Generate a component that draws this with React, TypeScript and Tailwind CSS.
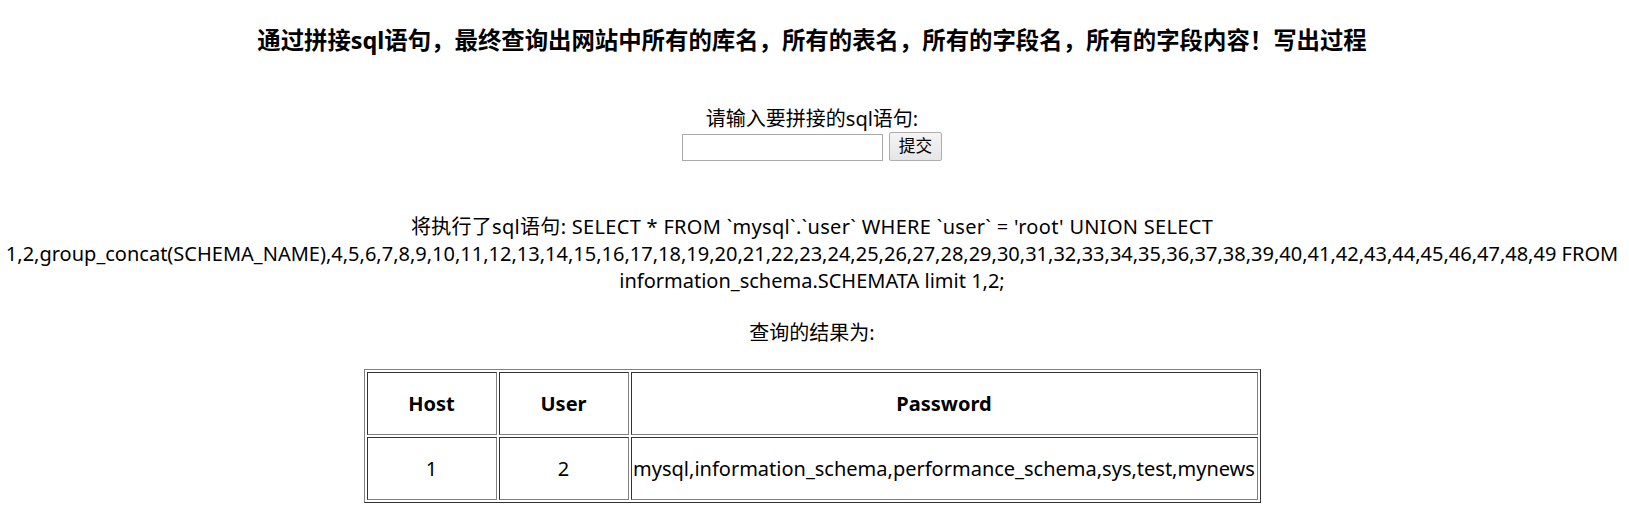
export default function App() {
  const font = {
    fontFamily: '"Noto Sans", "Noto Sans CJK SC", sans-serif',
  };

  return (
    <div
      className="w-[1624px] min-h-[519px] bg-white text-black text-center"
      style={font}
    >
      <h3 className="pt-[25px] text-[23.4px] leading-[31px] font-bold">
        通过拼接sql语句，最终查询出网站中所有的库名，所有的表名，所有的字段名，所有的字段内容！写出过程
      </h3>

      {/* form */}
      <div className="mt-[49px] text-[20px] leading-[27px]">请输入要拼接的sql语句:</div>
      <div className="flex items-end justify-center gap-[6px]">
        <input
          type="text"
          className="w-[201px] h-[27px] border border-[#a9a9a9] bg-white px-1 text-[16px] outline-none"
        />
        <button className="w-[53px] h-[29px] border border-[#adadad] rounded-[2px] bg-gradient-to-b from-[#f4f4f4] to-[#e6e6e6] text-[16.7px] leading-none">
          提交
        </button>
      </div>

      {/* executed sql */}
      <p className="mt-[52px] text-[20px] leading-[27px] whitespace-nowrap">
        <span className="tracking-[0.3px]">
          将执行了sql语句: SELECT * FROM `mysql`.`user` WHERE `user` = 'root' UNION SELECT
        </span>
        <br />
        1,2,group_concat(SCHEMA_NAME),4,5,6,7,8,9,10,11,12,13,14,15,16,17,18,19,20,21,22,23,24,25,26,27,28,29,30,31,32,33,34,35,36,37,38,39,40,41,42,43,44,45,46,47,48,49 FROM
        <br />
        information_schema.SCHEMATA limit 1,2;
      </p>

      <p className="mt-[25px] text-[20px] leading-[27px]">查询的结果为:</p>

      <table className="mx-auto mt-[23px] border-separate border-spacing-[2px] border border-t-[#808080] border-l-[#808080] border-r-[#333] border-b-[#333] text-[20px]">
        <tbody>
          <tr>
            <th className="w-[130px] h-[63px] p-0 border border-t-[#333] border-l-[#333] border-r-[#808080] border-b-[#808080] font-bold">
              Host
            </th>
            <th className="w-[130px] h-[63px] p-0 border border-t-[#333] border-l-[#333] border-r-[#808080] border-b-[#808080] font-bold">
              User
            </th>
            <th className="w-[627px] h-[63px] p-0 border border-t-[#333] border-l-[#333] border-r-[#808080] border-b-[#808080] font-bold">
              Password
            </th>
          </tr>
          <tr>
            <td className="h-[63px] p-0 border border-t-[#333] border-l-[#333] border-r-[#808080] border-b-[#808080]">
              1
            </td>
            <td className="h-[63px] p-0 border border-t-[#333] border-l-[#333] border-r-[#808080] border-b-[#808080]">
              2
            </td>
            <td className="h-[63px] p-0 border border-t-[#333] border-l-[#333] border-r-[#808080] border-b-[#808080] whitespace-nowrap">
              mysql,information_schema,performance_schema,sys,test,mynews
            </td>
          </tr>
        </tbody>
      </table>
    </div>
  );
}
